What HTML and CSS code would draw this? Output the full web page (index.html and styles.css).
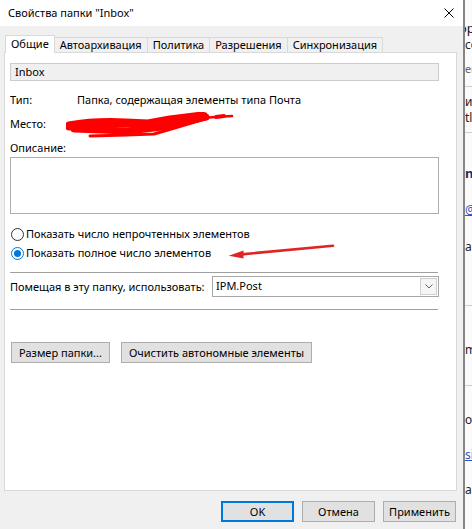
FILE: index.html
```html
<!DOCTYPE html>
<html lang="ru">
<head>
<meta charset="utf-8">
<title>Свойства папки "Inbox"</title>
<link rel="stylesheet" href="styles.css">
</head>
<body>
<div class="screen">
  <div class="dialog">
    <div class="titlebar">
      <span class="title">Свойства папки "Inbox"</span>
      <svg class="close" width="10" height="10" viewBox="0 0 10 10"><path d="M0.5 0.5 L9.5 9.5 M9.5 0.5 L0.5 9.5" stroke="#000" stroke-width="1" fill="none"/></svg>
    </div>
    <div class="tabs">
      <div class="tab active">Общие</div>
      <div class="tab">Автоархивация</div>
      <div class="tab">Политика</div>
      <div class="tab">Разрешения</div>
      <div class="tab">Синхронизация</div>
    </div>
    <div class="panel">
      <div class="namefield">Inbox</div>
      <div class="info-row"><span class="label">Тип:</span><span>Папка, содержащая элементы типа Почта</span></div>
      <div class="info-row place"><span class="label">Место:</span>
        <svg class="scribble" width="170" height="28" viewBox="0 0 170 28">
          <g stroke="#ff0000" fill="none" stroke-linecap="round" stroke-linejoin="round">
            <path d="M3 14 C20 11 40 10 60 11 L82 12 L104 8 L136 4" stroke-width="9"/>
            <path d="M8 17 L62 19 L96 15 L140 5" stroke-width="7"/>
            <path d="M118 7 L166 4" stroke-width="2.5"/>
            <path d="M24 24 L60 23 L88 22 L112 15 L142 6" stroke-width="3"/>
            <path d="M150 5 L158 4" stroke-width="4"/>
          </g>
          <circle cx="139" cy="2.5" r="2.2" fill="#ff0000"/>
        </svg>
      </div>
      <div class="info-row">Описание:</div>
      <div class="textarea"></div>
      <div class="radio-row"><span class="radio"></span><span>Показать число непрочтенных элементов</span></div>
      <div class="radio-row second"><span class="radio checked"></span><span>Показать полное число элементов</span></div>
      <div class="sep"></div>
      <div class="combo-row">
        <span>Помещая в эту папку, использовать:</span>
        <div class="combo">
          <span class="combo-text">IPM.Post</span>
          <span class="combo-btn"><svg width="8" height="5" viewBox="0 0 8 5"><path d="M0.5 0.5 L4 4 L7.5 0.5" stroke="#666" stroke-width="1" fill="none"/></svg></span>
        </div>
      </div>
      <div class="sep second"></div>
      <div class="btn-row">
        <div class="btn size-btn">Размер папки...</div>
        <div class="btn clear-btn">Очистить автономные элементы</div>
      </div>
    </div>
    <div class="footer">
      <div class="btn foot default">OK</div>
      <div class="btn foot">Отмена</div>
      <div class="btn foot">Применить</div>
    </div>
  </div>
  <div class="behind">
    <div class="b-line big m20"><span class="cut6">ор</span></div>
    <div class="b-line m1"><span>со</span></div>
    <div class="b-line small m8"><span>ек</span></div>
    <div class="b-hr m9"></div>
    <div class="b-line m7"><span>ик</span></div>
    <div class="b-line m0"><span>tle</span></div>
    <div class="b-hr m6"></div>
    <div class="b-line head m32"><span>n</span></div>
    <div class="b-line link m21"><span>@</span></div>
    <div class="b-line m21"><span>a</span></div>
    <div class="b-hr m50"></div>
    <div class="b-line m36"><span>m</span></div>
    <div class="b-hr m27"></div>
    <div class="b-line m26"><span>от</span></div>
    <div class="b-line link m19"><span>si</span></div>
    <div class="b-line m19"><span>a</span></div>
  </div>
  <svg class="arrow" width="112" height="22" viewBox="0 0 112 22">
    <path d="M14 14.6 L108 5.7" stroke="#e02424" stroke-width="2.6" stroke-linecap="round" fill="none"/>
    <path d="M3.7 15.7 L18.5 10.5 L18.5 18.6 Z" fill="#e02424"/>
  </svg>
</div>
</body>
</html>
```

FILE: styles.css
```css
* { box-sizing: border-box; }
html, body { margin: 0; padding: 0; }
body {
  width: 472px;
  height: 529px;
  overflow: hidden;
  font-family: "Noto Sans", "DejaVu Sans", sans-serif;
  font-size: 11px;
  color: #000;
  background: #fff;
}
.screen {
  position: relative;
  display: flex;
  height: 529px;
}
.dialog {
  width: 465px;
  flex: none;
  background: #f0f0f0;
  border-right: 2px solid #858585;
  display: flex;
  flex-direction: column;
}
.titlebar {
  height: 26px;
  background: #fff;
  display: flex;
  align-items: center;
  justify-content: space-between;
  padding: 0 9px 0 8px;
}
.title { line-height: 16px; }
.tabs {
  display: flex;
  align-items: flex-end;
  height: 17px;
  margin-top: 9px;
  padding-left: 5px;
  position: relative;
  z-index: 1;
}
.tab {
  height: 15px;
  line-height: 13px;
  padding: 0 5px;
  border: 1px solid #d9d9d9;
  border-bottom: none;
  background: #f0f0f0;
  margin-left: -1px;
  white-space: nowrap;
}
.tab.active {
  height: 18px;
  line-height: 15px;
  background: #fff;
  margin-bottom: -1px;
  margin-left: 0;
}
.panel {
  margin-left: 4px;
  width: 453px;
  height: 439px;
  border: 1px solid #d9d9d9;
  background: #fff;
  padding: 0 17px 0 5px;
  display: flex;
  flex-direction: column;
}
.namefield {
  margin-top: 10px;
  height: 18px;
  border: 1px solid #cccccc;
  background: #f0f0f0;
  padding-left: 4px;
  line-height: 15px;
}
.info-row {
  height: 16px;
  line-height: 16px;
  margin-top: 8px;
  display: flex;
  position: relative;
}
.namefield + .info-row { margin-top: 11px; }
.label { width: 67px; flex: none; }
.scribble {
  position: absolute;
  left: 56px;
  top: -4px;
}
.textarea {
  margin-top: 1px;
  height: 57px;
  border: 1px solid #abadb3;
  background: #fff;
}
.radio-row {
  margin-top: 12px;
  height: 16px;
  line-height: 16px;
  display: flex;
  align-items: center;
  gap: 2px;
}
.radio-row.second { margin-top: 3px; }
.radio {
  width: 13px;
  height: 13px;
  margin-left: 1px;
  border-radius: 50%;
  border: 1px solid #333;
  background: #fff;
  flex: none;
  display: flex;
  align-items: center;
  justify-content: center;
}
.radio.checked { border-color: #0078d7; }
.radio.checked::after {
  content: "";
  width: 7px;
  height: 7px;
  border-radius: 50%;
  background: #0078d7;
}
.sep {
  margin-top: 11px;
  height: 1px;
  background: #a0a0a0;
  width: 428px;
}
.sep.second { margin-top: 12px; }
.combo-row {
  margin-top: 3px;
  height: 21px;
  display: flex;
  align-items: center;
  justify-content: space-between;
}
.combo {
  width: 227px;
  height: 21px;
  border: 1px solid #a8a8a8;
  background: #fff;
  display: flex;
  align-items: center;
  justify-content: space-between;
  padding: 0 1px 0 3px;
}
.combo-text { line-height: 16px; margin-top: -2px; }
.combo-btn {
  width: 17px;
  height: 17px;
  border: 1px solid #cfcfcf;
  background: #f5f5f5;
  display: flex;
  align-items: center;
  justify-content: center;
}
.btn-row {
  margin-top: 32px;
  display: flex;
  gap: 11px;
  padding-left: 1px;
}
.btn {
  height: 21px;
  line-height: 19px;
  border: 1px solid #adadad;
  background: #e1e1e1;
  text-align: center;
  white-space: nowrap;
}
.size-btn { width: 99px; }
.clear-btn { width: 191px; }
.footer {
  margin-top: 10px;
  display: flex;
  justify-content: flex-end;
  gap: 8px;
  padding-right: 7px;
}
.btn.foot { width: 73px; }
.btn.default {
  border: 2px solid #0078d7;
  line-height: 17px;
}
.behind {
  flex: 1;
  background: #fbfbfb;
  overflow: hidden;
  display: flex;
  flex-direction: column;
  font-size: 12px;
  color: #222;
}
.b-line {
  height: 16px;
  line-height: 16px;
  white-space: nowrap;
  flex: none;
  overflow: hidden;
}
.b-line.big { font-size: 13px; color: #111; }
.b-line.small { font-size: 11px; color: #666; }
.b-line.head { font-size: 13px; font-weight: bold; color: #1b2f5a; }
.b-line.link { color: #2b56c4; text-decoration: underline; }
.b-hr { height: 1px; background: #cfcfcf; flex: none; }
.cut6 { display: inline-block; margin-left: -6px; }
.m0 { margin-top: 0; }
.m1 { margin-top: 1px; }
.m6 { margin-top: 6px; }
.m7 { margin-top: 7px; }
.m8 { margin-top: 8px; }
.m9 { margin-top: 9px; }
.m19 { margin-top: 19px; }
.m20 { margin-top: 20px; }
.m21 { margin-top: 21px; }
.m26 { margin-top: 26px; }
.m27 { margin-top: 27px; }
.m32 { margin-top: 32px; }
.m36 { margin-top: 36px; }
.m50 { margin-top: 50px; }
.arrow {
  position: absolute;
  left: 225px;
  top: 240px;
}
```
